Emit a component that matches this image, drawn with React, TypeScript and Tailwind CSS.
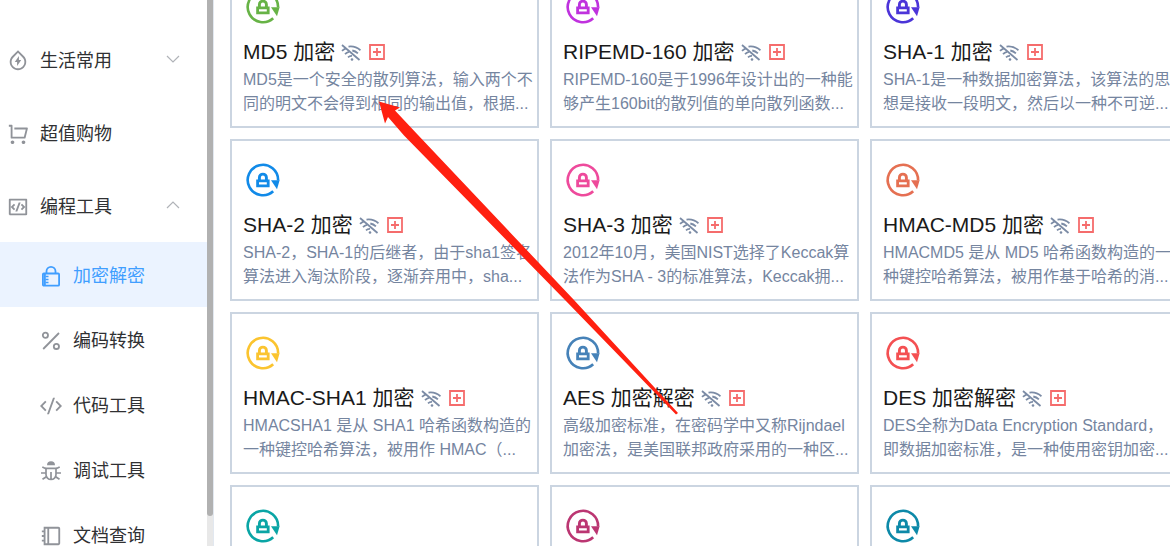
import type { ReactNode } from "react";
import {
  RiBookletLine,
  RiCodeBoxLine,
  RiCodeSSlashLine,
  RiShoppingCartLine,
  RiWaterFlashLine,
} from "react-icons/ri";

type Tool = {
  color: string;
  title?: string;
  lines?: string[];
};

const tools: Tool[] = [
  {
    color: "text-[#67b346]",
    title: "MD5 加密",
    lines: ["MD5是一个安全的散列算法，输入两个不", "同的明文不会得到相同的输出值，根据..."],
  },
  {
    color: "text-[#c032de]",
    title: "RIPEMD-160 加密",
    lines: ["RIPEMD-160是于1996年设计出的一种能", "够产生160bit的散列值的单向散列函数..."],
  },
  {
    color: "text-[#4b35d8]",
    title: "SHA-1 加密",
    lines: ["SHA-1是一种数据加密算法，该算法的思", "想是接收一段明文，然后以一种不可逆..."],
  },
  {
    color: "text-[#118ae8]",
    title: "SHA-2 加密",
    lines: ["SHA-2，SHA-1的后继者，由于sha1签名", "算法进入淘汰阶段，逐渐弃用中，sha..."],
  },
  {
    color: "text-[#ee4a9c]",
    title: "SHA-3 加密",
    lines: ["2012年10月，美国NIST选择了Keccak算", "法作为SHA - 3的标准算法，Keccak拥..."],
  },
  {
    color: "text-[#e57052]",
    title: "HMAC-MD5 加密",
    lines: ["HMACMD5 是从 MD5 哈希函数构造的一", "种键控哈希算法，被用作基于哈希的消..."],
  },
  {
    color: "text-[#fbc42f]",
    title: "HMAC-SHA1 加密",
    lines: ["HMACSHA1 是从 SHA1 哈希函数构造的", "一种键控哈希算法，被用作 HMAC（..."],
  },
  {
    color: "text-[#4682b8]",
    title: "AES 加密解密",
    lines: ["高级加密标准，在密码学中又称Rijndael", "加密法，是美国联邦政府采用的一种区..."],
  },
  {
    color: "text-[#f45052]",
    title: "DES 加密解密",
    lines: ["DES全称为Data Encryption Standard，", "即数据加密标准，是一种使用密钥加密..."],
  },
  { color: "text-[#0aa5a5]" },
  { color: "text-[#bb3672]" },
  { color: "text-[#0d89a8]" },
];

const LockCycle = ({ className }: { className: string }) => (
  <svg viewBox="0 0 40 40" className={`size-10 ${className}`} fill="none" stroke="currentColor" strokeWidth="2.6">
    <path d="M30.2 31.2A15.2 15.2 0 1 1 35.1 20.5" />
    <path d="M28 20.3h8.6L34 29.2z" fill="currentColor" stroke="none" />
    <path d="M14.6 20.9h10.6v5H14.6z" strokeWidth="2.8" />
    <path d="M16.4 21v-3.4a3.5 3.5 0 0 1 7 0V21" strokeWidth="2.9" />
  </svg>
);

const WifiOff = () => (
  <svg viewBox="0 0 20 17" className="ml-1.5 h-[17px] w-5 text-[#7b8ba5]" fill="none" stroke="currentColor" strokeWidth="1.8">
    <path d="M1 1l17.500 15" />
    <path d="M7.500 2.600c4.700-.7 8.700.8 12 3.600M1 6.800c1.200-1.100 2.400-1.900 3.800-2.500" />
    <path d="M11.300 6.500c2.200.4 4 1.400 5.600 2.900M4 10.200c1.100-1.100 2.400-1.900 3.900-2.300" />
    <path d="M7 13.300c1.100-1 2.400-1.500 4-1.400" />
    <circle cx="11" cy="15.500" r="1.300" fill="currentColor" stroke="none" />
  </svg>
);

const PlusBox = () => (
  <svg viewBox="0 0 16 16" className="size-4 text-[#f56c6c]" fill="none" stroke="currentColor" strokeWidth="1.8">
    <path d="M1 1h14v14H1zM8 4v8M4 8h8" />
  </svg>
);

const Padlock = () => (
  <svg viewBox="0 0 22 22" className="size-[22px]" fill="none" stroke="currentColor" strokeWidth="1.8">
    <rect x="2.900" y="8.500" width="16.200" height="12.200" rx="1" />
    <path d="M6.500 8.500V6.300a4.500 4.500 0 0 1 9 0v2.200" />
    <path d="M4.800 9v11" strokeWidth="2" />
    <path d="M5.500 11.500h3M5.500 14.500h3M5.500 17.500h3" strokeWidth="1.300" />
  </svg>
);

const Percent = () => (
  <svg viewBox="0 0 22 22" className="size-[22px]" fill="none" stroke="currentColor" strokeWidth="1.800">
    <circle cx="5.400" cy="5.200" r="2.600" />
    <circle cx="16.400" cy="16.400" r="2.600" />
    <path d="M19 3L3.200 19" />
  </svg>
);

const Bug = () => (
  <svg viewBox="0 0 22 22" className="size-[22px]" fill="none" stroke="currentColor" strokeWidth="1.700">
    <path d="M7 5.300a4 4 0 0 1 8 0z" fill="currentColor" stroke="none" />
    <path d="M6 8.300h10v6.200a5 5 0 0 1-10 0zM11 12v8" />
    <path d="M2.300 7l3.700 1.800M19.700 7L16 8.800M1 13h5M16 13h5M2.500 19.300l3.900-2.600M19.500 19.300l-3.900-2.600" />
  </svg>
);

const Chevron = ({ up }: { up?: boolean }) => (
  <svg viewBox="0 0 14 8" className="mb-1 h-2 w-3.5 text-[#b0b3b8]" fill="none" stroke="currentColor" strokeWidth="1.2">
    <path d={up ? "M1 7l6-6 6 6" : "M1 1l6 6 6-6"} />
  </svg>
);

const MenuItem = ({ icon, label, children }: { icon: ReactNode; label: string; children?: ReactNode }) => (
  <button className="flex h-[73px] w-full items-center pt-0.5 pl-[7px] pr-[27px] text-[#303133]">
    <span className="mr-[11px] text-[22px] text-[#909399]">{icon}</span>
    <span className="mr-auto">{label}</span>
    {children}
  </button>
);

const SubItem = ({ icon, label, active }: { icon: ReactNode; label: string; active?: boolean }) => (
  <a
    href="#"
    className={`flex h-[65px] items-center pt-0.5 pl-10 ${active ? "bg-[#ebf3ff] text-[#409eff]" : "text-[#303133]"}`}
  >
    <span className={`mr-[11px] text-[22px] ${active ? "" : "text-[#909399]"}`}>{icon}</span>
    {label}
  </a>
);

const ToolCard = ({ tool }: { tool: Tool }) => (
  <article className="min-h-[162px] border-2 border-[#cbd5e1] pt-[19px] pr-2 pb-[10px] pl-[11px] whitespace-nowrap">
    <LockCycle className={tool.color} />
    {tool.title && (
      <div className="mt-[11px] flex items-center gap-2">
        <div className="flex items-center">
          <h3 className="text-[21px] leading-7 text-[#1a1a1a]">{tool.title}</h3>
          <WifiOff />
        </div>
        <PlusBox />
      </div>
    )}
    {tool.lines && (
      <p className="mt-0.5 text-base leading-6 text-[#75859f]">
        {tool.lines[0]}
        <br />
        {tool.lines[1]}
      </p>
    )}
  </article>
);

const App = () => {
  return (
    <div className="relative flex h-screen overflow-hidden bg-white font-['Liberation_Sans','Noto_Sans_CJK_SC',sans-serif]">
      <aside className="flex w-[214px] shrink-0 border-r border-[#e2e8f0]">
        <nav className="flex-1 overflow-hidden pt-[23px] text-lg">
          <MenuItem icon={<RiWaterFlashLine />} label="生活常用">
            <Chevron />
          </MenuItem>
          <MenuItem icon={<RiShoppingCartLine />} label="超值购物" />
          <MenuItem icon={<RiCodeBoxLine />} label="编程工具">
            <Chevron up />
          </MenuItem>
          <SubItem icon={<Padlock />} label="加密解密" active />
          <SubItem icon={<Percent />} label="编码转换" />
          <SubItem icon={<RiCodeSSlashLine />} label="代码工具" />
          <SubItem icon={<Bug />} label="调试工具" />
          <SubItem icon={<RiBookletLine />} label="文档查询" />
        </nav>
        <div className="w-1.5 bg-[#e8e8e8]">
          <div className="h-[94.5%] rounded-b-sm bg-[#b1b1b1]" />
        </div>
      </aside>

      <main className="min-w-0 flex-1 overflow-hidden pl-4">
        <div className="-mt-[34px] -mr-[9px] grid grid-cols-3 gap-[11px]">
          {tools.map((tool, i) => (
            <ToolCard key={i} tool={tool} />
          ))}
        </div>
      </main>

      <svg className="pointer-events-none absolute top-0 left-0" width="700" height="430" fill="#ff2010">
        <path d="M379 101.500L400 107.500L395 110.500L418 135L574 300L678 413L676 414.500L565 300L404 135.500L388 117L385 123.500Z" />
      </svg>
    </div>
  );
};

export default App;
